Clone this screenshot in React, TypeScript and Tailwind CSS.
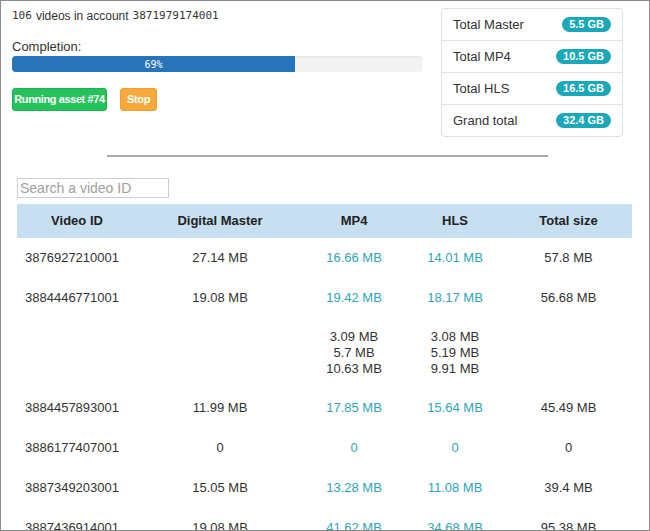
import React from "react";

type Row = { id: string; dm: string; mp4: string[]; hls: string[]; total: string; sub?: boolean };

const rows: Row[] = [
  { id: "3876927210001", dm: "27.14 MB", mp4: ["16.66 MB"], hls: ["14.01 MB"], total: "57.8 MB" },
  { id: "3884446771001", dm: "19.08 MB", mp4: ["19.42 MB"], hls: ["18.17 MB"], total: "56.68 MB" },
  { id: "", dm: "", mp4: ["3.09 MB", "5.7 MB", "10.63 MB"], hls: ["3.08 MB", "5.19 MB", "9.91 MB"], total: "", sub: true },
  { id: "3884457893001", dm: "11.99 MB", mp4: ["17.85 MB"], hls: ["15.64 MB"], total: "45.49 MB" },
  { id: "3886177407001", dm: "0", mp4: ["0"], hls: ["0"], total: "0" },
  { id: "3887349203001", dm: "15.05 MB", mp4: ["13.28 MB"], hls: ["11.08 MB"], total: "39.4 MB" },
  { id: "3887436914001", dm: "19.08 MB", mp4: ["41.62 MB"], hls: ["34.68 MB"], total: "95.38 MB" },
];

const totals = [
  { label: "Total Master", value: "5.5 GB" },
  { label: "Total MP4", value: "10.5 GB" },
  { label: "Total HLS", value: "16.5 GB" },
  { label: "Grand total", value: "32.4 GB" },
];

export default function App() {
  return (
    <div className="w-[650px] h-[531px] border border-[#8a8a8a] bg-white overflow-hidden font-['Liberation_Sans',Arial,sans-serif] text-[#333]">
      <div className="flex">
        <div className="ml-[11px] w-[410px] pt-[5px]">
          <div className="h-[20px] leading-[20px] text-[12px] flex items-center">
            <span className="font-['DejaVu_Sans_Mono',monospace] text-[11px]">106</span>
            <span className="ml-[4px]">videos in account</span>
            <span className="ml-[4px] font-['DejaVu_Sans_Mono',monospace] text-[11px]">3871979174001</span>
          </div>
          <div className="mt-[12px] h-[18px] leading-[18px] text-[13px]">Completion:</div>
          <div className="h-[16px] w-[410px] rounded-[4px] bg-[#f3f3f3] overflow-hidden shadow-[inset_0_1px_2px_rgba(0,0,0,0.08)]">
            <div className="h-full bg-[#2874b9] flex items-center justify-center text-white text-[10px] font-['DejaVu_Sans_Mono',monospace]" style={{ width: "69%" }}>
              69%
            </div>
          </div>
          <div className="mt-[16px] flex gap-[13px]">
            <button className="h-[23px] w-[95px] px-0 whitespace-nowrap rounded-[3px] bg-[#24c25a] border border-[#1fb050] text-white text-[11px] font-bold tracking-[-0.4px]">
              Running asset #74
            </button>
            <button className="h-[23px] w-[37px] px-0 whitespace-nowrap rounded-[3px] bg-[#f7aa3c] border border-[#eea032] text-white text-[11px] font-bold tracking-[-0.3px]">
              Stop
            </button>
          </div>
        </div>
        <div className="ml-[19px] mt-[7px] w-[182px] border border-[#dedede] rounded-[4px]">
          {totals.map((t, i) => (
            <div
              key={t.label}
              className={`flex items-center justify-between pl-[11px] pr-[11px] text-[13px] ${i < 3 ? "h-[32px] border-b border-[#e2e2e2]" : "h-[31px]"}`}
            >
              <span>{t.label}</span>
              <span className="h-[15px] leading-[15px] px-[7px] rounded-full bg-[#1ba8b8] text-white text-[11px] font-bold">
                {t.value}
              </span>
            </div>
          ))}
        </div>
      </div>

      <div className="mt-[18px] ml-[106px] w-[441px] h-[2px] bg-[#aaaaaa]" />

      <input
        placeholder="Search a video ID"
        className="mt-[21px] ml-[16px] block w-[152px] h-[20px] border border-[#cfcfcf] px-[2px] text-[14px] placeholder:text-[#a0a0a0] outline-none"
      />

      <table className="mt-[6px] ml-[16px] w-[615px] table-fixed border-collapse text-[13px]">
        <colgroup>
          <col className="w-[120px]" />
          <col className="w-[166px]" />
          <col className="w-[102px]" />
          <col className="w-[100px]" />
          <col className="w-[127px]" />
        </colgroup>
        <thead>
          <tr className="bg-[#c6dff1] h-[34px] text-[#222]">
            <th className="font-bold text-center">Video ID</th>
            <th className="font-bold text-center">Digital Master</th>
            <th className="font-bold text-center">MP4</th>
            <th className="font-bold text-center">HLS</th>
            <th className="font-bold text-center">Total size</th>
          </tr>
        </thead>
        <tbody>
          {rows.map((r, i) => (
            <tr key={i} className={r.sub ? "h-[70px]" : "h-[40px]"}>
              <td className="pl-[8px] text-left">{r.id}</td>
              <td className="text-center">{r.dm}</td>
              <td className={`text-center leading-[16px] ${r.sub ? "text-[#333]" : "text-[#2fa5b6]"}`}>
                {r.mp4.map((v) => (
                  <div key={v}>{v}</div>
                ))}
              </td>
              <td className={`text-center leading-[16px] ${r.sub ? "text-[#333]" : "text-[#2fa5b6]"}`}>
                {r.hls.map((v) => (
                  <div key={v}>{v}</div>
                ))}
              </td>
              <td className="text-center">{r.total}</td>
            </tr>
          ))}
        </tbody>
      </table>
    </div>
  );
}
